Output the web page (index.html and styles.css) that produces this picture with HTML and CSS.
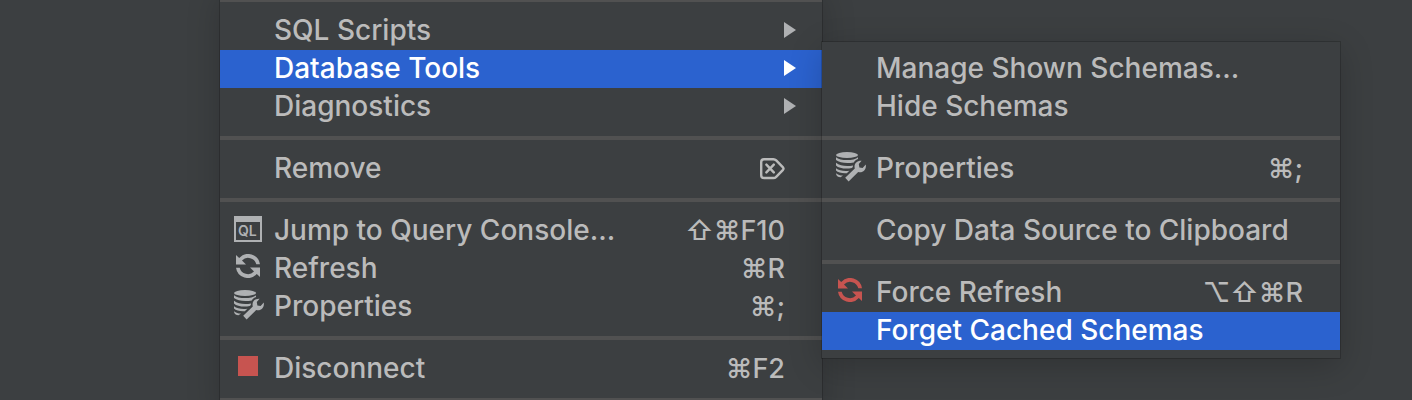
FILE: index.html
```html
<!DOCTYPE html>
<html lang="en">
<head>
<meta charset="utf-8">
<title>Database context menu</title>
<link rel="stylesheet" href="styles.css">
</head>
<body>
<svg class="defs" aria-hidden="true">
  <symbol id="refresh" viewBox="0 0 24 24">
    <path d="M0 1 L3.200 4 A12 12 0 0 1 24 10.300 H20.300 A8.500 8.500 0 0 0 6 6.400 L10 10.600 H0 Z"/>
    <path d="M24 23 L20.800 20 A12 12 0 0 1 0 13.700 H3.700 A8.500 8.500 0 0 0 18 17.600 L14 13.400 H24 Z"/>
  </symbol>
  <symbol id="dbtools" viewBox="0 0 30 30">
    <ellipse cx="11" cy="3" rx="11" ry="3"/>
    <path d="M0 5.200 C4 9 18 9 22 5.200 V7 C20.500 7.600 18.600 8.800 17.800 10.400 C12 11.600 3.500 11.200 0 8 Z"/>
    <path d="M0 10.800 C4 14 11 14.600 17 13.400 L16.800 15 L15.800 16 C10 17.200 3 16.400 0 13.400 Z"/>
    <path d="M0 16.200 C3 18.700 8.500 19.500 13.400 18.700 L10.800 21.200 C7 21.600 2 20.800 0 18.600 Z"/>
    <path d="M0 21.200 C2 22.800 4 23.400 7 23.600 L4.600 25.200 C2 25.200 0 24 0 21.200 Z"/>
    <path d="M9.200 25.800 L18.800 16.600 C17.600 12 20.500 8.500 25.600 8.800 L22.800 12 L23.400 15.400 L26.600 16 L29.800 12.600 C30.600 17.600 27 21.200 22.200 20 L12.600 29.400 Z"/>
  </symbol>
</svg>
<main class="desktop">
  <div class="menu menu-main" role="menu" aria-label="Data source">
    <hr>
    <button class="item" role="menuitem"><span class="icon"></span><span class="label">SQL Scripts</span><svg class="arrow" viewBox="0 0 12 16"><path d="M0 0 12 8 0 16Z"/></svg></button>
    <button class="item selected" role="menuitem" aria-expanded="true"><span class="icon"></span><span class="label">Database Tools</span><svg class="arrow" viewBox="0 0 12 16"><path d="M0 0 12 8 0 16Z"/></svg></button>
    <button class="item" role="menuitem"><span class="icon"></span><span class="label">Diagnostics</span><svg class="arrow" viewBox="0 0 12 16"><path d="M0 0 12 8 0 16Z"/></svg></button>
    <hr>
    <button class="item" role="menuitem"><span class="icon"></span><span class="label">Remove</span><svg class="delete" viewBox="0 0 26 22"><path d="M5 1.200H14.400Q16 1.200 17.200 2.400L24 9.400Q25 10.600 24 11.800L17.200 18.800Q16 20 14.400 20H5Q2.200 20 2.200 17.200V4Q2.200 1.200 5 1.200ZM7.400 6.600 14.800 14.400M14.800 6.600 7.400 14.400"/></svg></button>
    <hr>
    <button class="item" role="menuitem"><span class="icon"><svg class="console" viewBox="0 0 28 26"><path fill-rule="evenodd" d="M0 0H28V26H0ZM2 6V24H26V6Z"/><text x="4" y="20">QL</text></svg></span><span class="label">Jump to Query Console...</span><kbd>⇧⌘F10</kbd></button>
    <button class="item" role="menuitem"><span class="icon"><svg class="refresh"><use href="#refresh"/></svg></span><span class="label">Refresh</span><kbd>⌘R</kbd></button>
    <button class="item" role="menuitem"><span class="icon"><svg class="dbtools"><use href="#dbtools"/></svg></span><span class="label">Properties</span><kbd>⌘;</kbd></button>
    <hr>
    <button class="item" role="menuitem"><span class="icon"><svg class="stop" viewBox="0 0 20 20"><path d="M0 0H20V20H0Z"/></svg></span><span class="label">Disconnect</span><kbd>⌘F2</kbd></button>
    <hr>
  </div>
  <div class="menu submenu" role="menu" aria-label="Database Tools">
    <button class="item" role="menuitem"><span class="icon"></span><span class="label">Manage Shown Schemas...</span></button>
    <button class="item" role="menuitem"><span class="icon"></span><span class="label">Hide Schemas</span></button>
    <hr>
    <button class="item" role="menuitem"><span class="icon"><svg class="dbtools"><use href="#dbtools"/></svg></span><span class="label">Properties</span><kbd>⌘;</kbd></button>
    <hr>
    <button class="item" role="menuitem"><span class="icon"></span><span class="label">Copy Data Source to Clipboard</span></button>
    <hr>
    <button class="item" role="menuitem"><span class="icon"><svg class="refresh danger"><use href="#refresh"/></svg></span><span class="label">Force Refresh</span><kbd>⌥⇧⌘R</kbd></button>
    <button class="item selected" role="menuitem"><span class="icon"></span><span class="label">Forget Cached Schemas</span></button>
  </div>
</main>
</body>
</html>
```
FILE: styles.css
```css
* { box-sizing: border-box; }
html { overflow: hidden; background: #3c3f41; }
body { margin: 0; font-family: Inter, Roboto, sans-serif; color: #bbb; }
.defs { position: absolute; width: 0; height: 0; }
.desktop { display: flex; align-items: flex-start; padding-left: 220px; }
.menu {
  flex: none;
  background: #3c3f41;
  box-shadow: 0 0 0 1px rgba(0, 0, 0, .18), 0 8px 32px rgba(0, 0, 0, .2);
}
.menu-main { min-width: 602px; margin-top: -12px; }
.submenu { min-width: 518px; margin-top: 42px; padding: 8px 0; }
.menu hr { height: 4px; margin: 10px 0; border: 0; background: #515151; }
.item {
  display: flex;
  align-items: center;
  width: 100%;
  height: 38px;
  padding: 0 37px 0 14px;
  border: 0;
  background: none;
  color: inherit;
  font: 500 28px/36px Inter, Roboto, sans-serif;
  text-align: left;
  white-space: nowrap;
}
.item.selected { background: #2b62cf; color: #fff; }
.icon { display: flex; align-items: center; flex: none; width: 40px; height: 38px; }
.icon svg { fill: #afb1b3; }
.label { flex: 1; padding-bottom: 2px; }
.arrow { width: 12px; height: 16px; margin: 0 -11px 2px 0; fill: #afb1b3; }
.selected .arrow { fill: #fff; }
.delete { width: 26px; height: 22px; fill: none; stroke: #bbb; stroke-width: 2.400; stroke-linecap: round; stroke-linejoin: round; }
.console { width: 28px; height: 26px; margin-bottom: 4px; }
.console text { font: 600 14px Inter, sans-serif; }
.refresh { width: 24px; height: 24px; margin: 0 2px 6px; }
.icon .danger, .icon .stop { fill: #c75450; }
.dbtools { width: 30px; height: 30px; margin-bottom: 4px; }
.stop { width: 20px; height: 20px; margin: 0 4px 6px; }
kbd { font: 500 27px/36px Inter, sans-serif; }
```
